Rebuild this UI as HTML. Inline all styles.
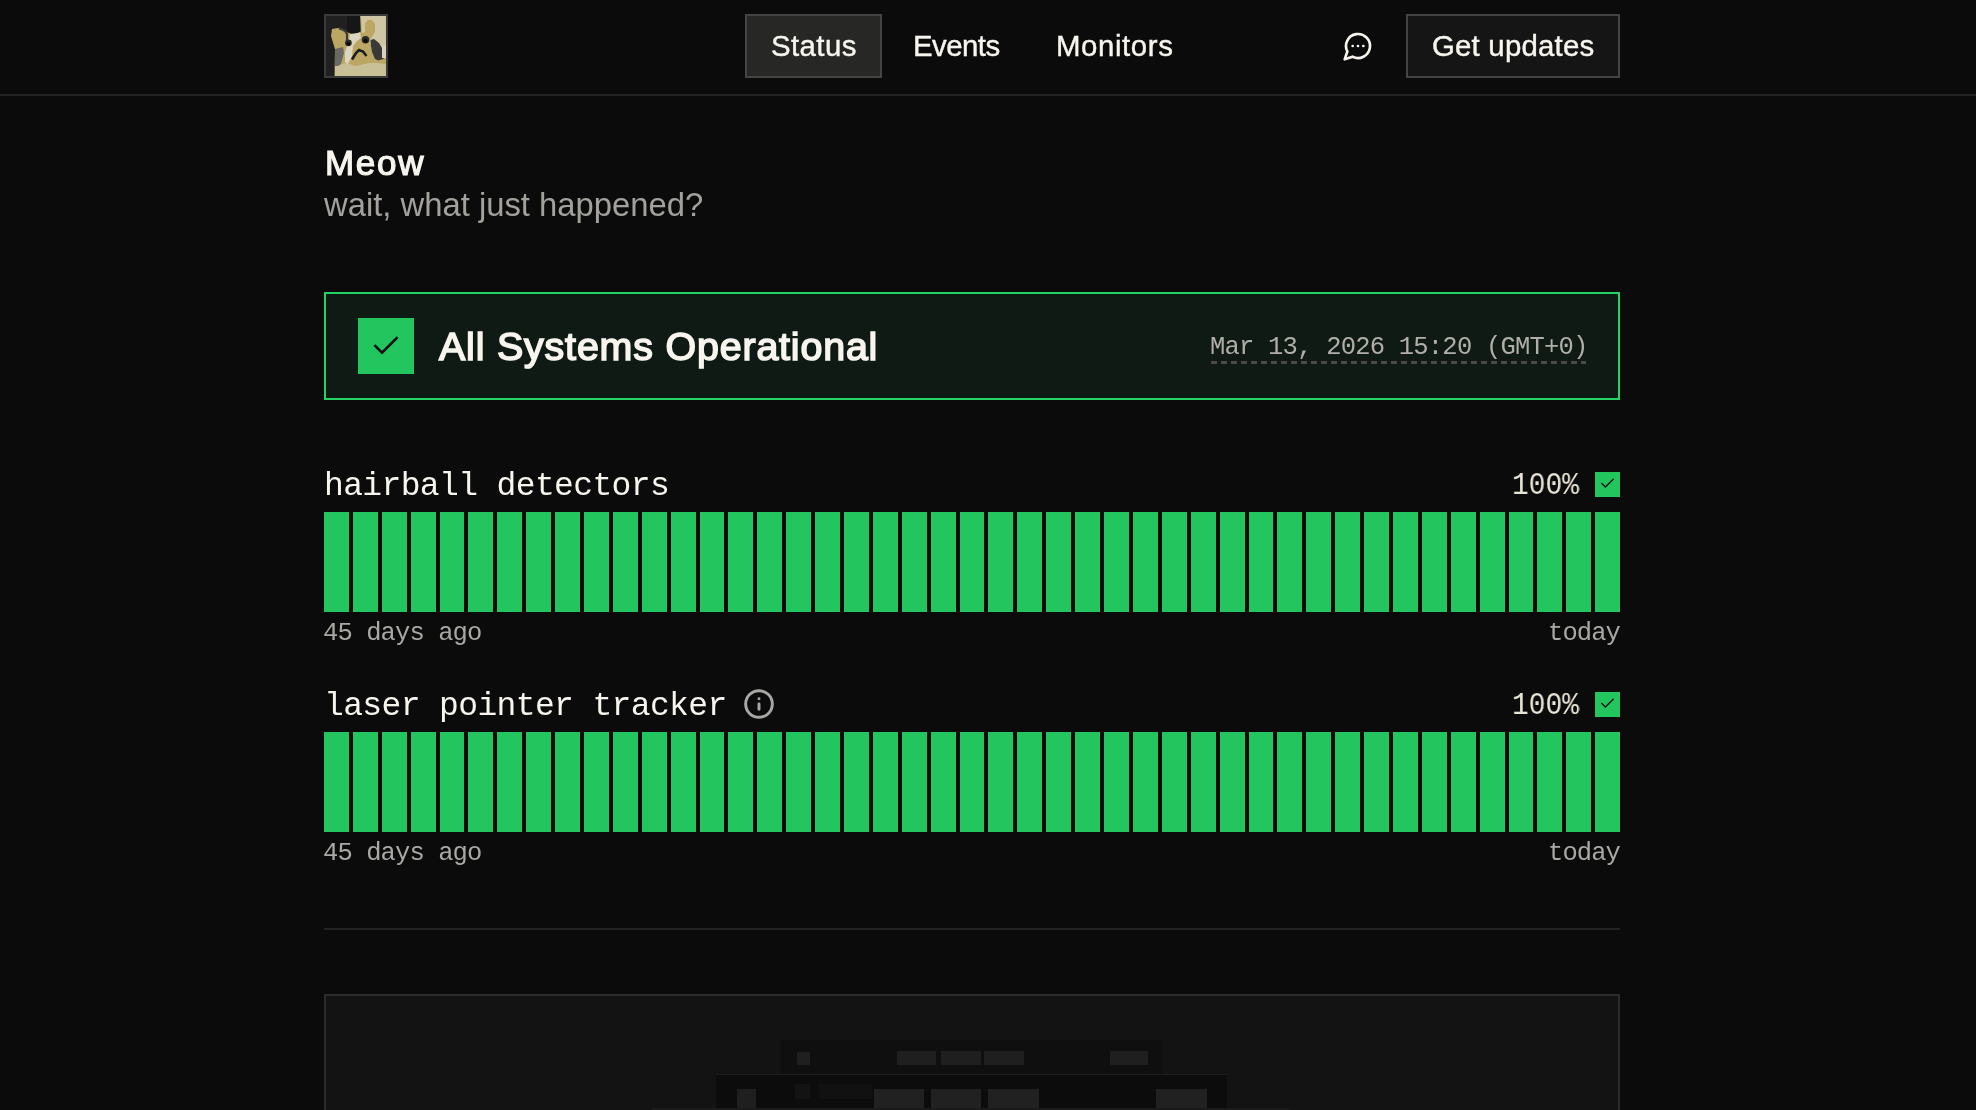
<!DOCTYPE html>
<html><head><meta charset="utf-8">
<style>
*{box-sizing:border-box;margin:0;padding:0}
html,body{width:1976px;height:1110px;overflow:hidden;background:#0b0b0b;color:#f7f5ee;font-family:"Liberation Sans",sans-serif}
.abs{position:absolute}
.t{position:absolute;white-space:pre;line-height:1;will-change:transform}
.hdr{position:absolute;left:0;top:94px;width:1976px;height:2px;background:#232323}
.logo{left:324px;top:14px;width:64px;height:64px;border:2px solid #3a3a3a;background:#1c1c1c;overflow:hidden}
.btn{top:14px;height:64px;border:2px solid #444444}
.mono{font-family:"Liberation Mono",monospace}
.bars{display:flex;gap:4px;position:absolute;left:324px;width:1296px;height:100px}
.bars i{flex:1;background:#22c55e}
.sq{position:absolute;background:#22c55e}
</style></head><body>
<div class="hdr"></div>
<div class="abs logo"><svg width="60" height="60" viewBox="0 0 60 60" style="display:block" shape-rendering="geometricPrecision">
<rect width="60" height="60" fill="#bba763"/>
<path d="M35 0H60V30H56V42H50L46 36L44 24L49 16V8L46 4H42L39 7V16L36 17Z" fill="#cfc7a3"/>
<path d="M9 50L20 47L30 50L43 47L50 47L60 48V60H9Z" fill="#c9c098"/>
<path d="M24 18L34 16.5L35 22L31 25L27 30L26 40L22 48L19 46L19 36L22 28Z" fill="#dbd6c1"/>
<path d="M0 0H34L34.5 15.5L31 17L25 17.5L21 16L17 13L12 12L6 13L5 20L9 33L8.5 60H0Z" fill="#202020"/>
<path d="M21 0H34L34.5 15.5L31 17L25 17.5L21 16Z" fill="#161616"/>
<path d="M6 13.5L11 13L15 16L17.5 19L17.5 22L16 24L17 30L14 31L9 31L6 22Z" fill="#bba763"/>
<path d="M13 12.5Q19 13.5 21 18L21 24" stroke="#3c3b37" stroke-width="2.2" fill="none"/>
<path d="M9 33L17 31L18 37L15 48L12 50L9 50Z" fill="#6a6961"/>
<path d="M44.5 24L48 23L53 27L56 32L57.7 43L52 44.5L49 43L46 36L45 30Z" fill="#3a3935"/>
<path d="M56 30H60V42H56Z" fill="#d8d3bd"/>
<circle cx="22.4" cy="26.8" r="3.4" fill="#2a2a28"/>
<circle cx="22.4" cy="27.8" r="1.8" fill="#080808"/>
<circle cx="39.5" cy="23.8" r="3.8" fill="#2a2a28"/>
<circle cx="39.5" cy="25" r="2" fill="#080808"/>
<path d="M26 43.5L30 37L33 34L37 35.5L40.5 40" stroke="#1c1c1c" stroke-width="2.6" fill="none"/>
</svg></div>
<div class="abs btn" style="left:745px;width:137px;background:#272725"></div>
<div class="t" style="left:771px;top:31.2px;font-size:29.4px;letter-spacing:0.4px;-webkit-text-stroke:0.4px #f7f5ee">Status</div>
<div class="t" style="left:913px;top:31.2px;font-size:29.4px;letter-spacing:-0.55px;-webkit-text-stroke:0.4px #f7f5ee">Events</div>
<div class="t" style="left:1056px;top:31.2px;font-size:29.4px;letter-spacing:0.6px;-webkit-text-stroke:0.4px #f7f5ee">Monitors</div>
<svg class="abs" style="left:1342px;top:30px" width="32" height="32" viewBox="0 0 24 24" fill="none" stroke="#f7f5ee" stroke-width="2" stroke-linecap="round" stroke-linejoin="round"><path d="M7.9 20A9 9 0 1 0 4 16.1L2 22Z"/><path d="M8 12h.01"/><path d="M12 12h.01"/><path d="M16 12h.01"/></svg>
<div class="abs btn" style="left:1406px;width:214px;background:#151515"></div>
<div class="t" style="left:1432px;top:31.2px;font-size:29.4px;letter-spacing:0.2px;-webkit-text-stroke:0.4px #f7f5ee">Get updates</div>

<div class="t" style="left:325px;top:145.4px;font-size:35px;-webkit-text-stroke:1.2px #f7f5ee;letter-spacing:1.7px">Meow</div>
<div class="t" style="left:324px;top:189px;font-size:32.8px;color:#a3a19c;letter-spacing:0px">wait, what just happened?</div>

<div class="abs" style="left:324px;top:292px;width:1296px;height:108px;border:2px solid #23d366;background:#0f1a14"></div>
<div class="sq" style="left:358px;top:318px;width:56px;height:56px"><svg width="32" height="32" viewBox="0 0 24 24" fill="none" stroke="#101010" stroke-width="1.9" stroke-linecap="square" stroke-linejoin="miter" style="position:absolute;left:12px;top:12px"><path d="M20 6 9 17l-5-5"/></svg></div>
<div class="t" style="left:439px;top:326.9px;font-size:39.4px;-webkit-text-stroke:1.6px #f7f5ee;letter-spacing:0.82px">All Systems Operational</div>
<div class="t mono" style="left:1210px;top:334.6px;font-size:25.5px;letter-spacing:-0.78px;color:#b0aea8">Mar 13, 2026 15:20 (GMT+0)</div>
<div class="abs" style="left:1211px;top:361px;width:375px;height:3px;background:repeating-linear-gradient(90deg,#4a4946 0 6px,transparent 6px 10px)"></div>

<div class="t mono" style="left:324px;top:469.6px;font-size:33px;letter-spacing:-0.63px">hairball detectors</div>
<div class="t mono" style="left:1512px;top:469.8px;font-size:31px;transform:scaleX(0.9);transform-origin:0 0;color:#e8e4d6">100%</div>
<div class="sq" style="left:1595px;top:472px;width:25px;height:25px"><svg width="17" height="17" viewBox="0 0 24 24" fill="none" stroke="#151515" stroke-width="1.9" stroke-linecap="square" style="position:absolute;left:4px;top:2.5px"><path d="M20 6 9 17l-5-5"/></svg></div>
<div class="bars" style="top:512px"><i></i><i></i><i></i><i></i><i></i><i></i><i></i><i></i><i></i><i></i><i></i><i></i><i></i><i></i><i></i><i></i><i></i><i></i><i></i><i></i><i></i><i></i><i></i><i></i><i></i><i></i><i></i><i></i><i></i><i></i><i></i><i></i><i></i><i></i><i></i><i></i><i></i><i></i><i></i><i></i><i></i><i></i><i></i><i></i><i></i></div>
<div class="t mono" style="left:323px;top:620.6px;font-size:25.5px;letter-spacing:-0.9px;color:#a9a8a4">45 days ago</div>
<div class="t mono" style="left:1548px;top:620.6px;font-size:25.5px;letter-spacing:-0.9px;color:#a9a8a4">today</div>

<div class="t mono" style="left:324px;top:689.6px;font-size:33px;letter-spacing:-0.63px">laser pointer tracker</div>
<svg class="abs" style="left:743px;top:688px" width="32" height="32" viewBox="0 0 24 24" fill="none" stroke="#a8a7a4" stroke-width="2.2" stroke-linecap="round" stroke-linejoin="round"><circle cx="12" cy="12" r="10"/><path d="M12 16v-4"/><path d="M12 8h.01"/></svg>
<div class="t mono" style="left:1512px;top:689.8px;font-size:31px;transform:scaleX(0.9);transform-origin:0 0;color:#e8e4d6">100%</div>
<div class="sq" style="left:1595px;top:692px;width:25px;height:25px"><svg width="17" height="17" viewBox="0 0 24 24" fill="none" stroke="#151515" stroke-width="1.9" stroke-linecap="square" style="position:absolute;left:4px;top:2.5px"><path d="M20 6 9 17l-5-5"/></svg></div>
<div class="bars" style="top:732px"><i></i><i></i><i></i><i></i><i></i><i></i><i></i><i></i><i></i><i></i><i></i><i></i><i></i><i></i><i></i><i></i><i></i><i></i><i></i><i></i><i></i><i></i><i></i><i></i><i></i><i></i><i></i><i></i><i></i><i></i><i></i><i></i><i></i><i></i><i></i><i></i><i></i><i></i><i></i><i></i><i></i><i></i><i></i><i></i><i></i></div>
<div class="t mono" style="left:323px;top:840.6px;font-size:25.5px;letter-spacing:-0.9px;color:#a9a8a4">45 days ago</div>
<div class="t mono" style="left:1548px;top:840.6px;font-size:25.5px;letter-spacing:-0.9px;color:#a9a8a4">today</div>

<div class="abs" style="left:324px;top:928px;width:1296px;height:2px;background:#232323"></div>
<div class="abs" style="left:324px;top:994px;width:1296px;height:140px;border:2px solid #2c2c2b;background:#131313;overflow:hidden">
  <div class="abs" style="left:454.5px;top:44px;width:381px;height:34px;background:#0f0f0f"></div>
  <div class="abs" style="left:471px;top:56px;width:13px;height:13px;background:#1f1f1f"></div>
  <div class="abs" style="left:571px;top:55px;width:39px;height:14px;background:#1f1f1f"></div>
  <div class="abs" style="left:615px;top:55px;width:40px;height:14px;background:#1f1f1f"></div>
  <div class="abs" style="left:658px;top:55px;width:40px;height:14px;background:#1f1f1f"></div>
  <div class="abs" style="left:784px;top:55px;width:38px;height:14px;background:#1f1f1f"></div>
  <div class="abs" style="left:390px;top:78px;width:511px;height:35px;background:#0c0c0c;border-top:1px solid #1c1f1d"></div>
      <div class="abs" style="left:411px;top:93px;width:19px;height:19px;background:#1f1f1f"></div>
  <div class="abs" style="left:469px;top:88px;width:15px;height:15px;background:#131313"></div>
  <div class="abs" style="left:493px;top:88px;width:53px;height:15px;background:#111111"></div>
  <div class="abs" style="left:547.5px;top:93px;width:50.5px;height:19px;background:#212121"></div>
  <div class="abs" style="left:605px;top:93px;width:50px;height:19px;background:#212121"></div>
  <div class="abs" style="left:662px;top:93px;width:51px;height:19px;background:#212121"></div>
  <div class="abs" style="left:830px;top:93px;width:51px;height:19px;background:#212121"></div>
  <div class="abs" style="left:326px;top:112px;width:639px;height:10px;background:#1a1a1a"></div>
</div>
</body></html>
